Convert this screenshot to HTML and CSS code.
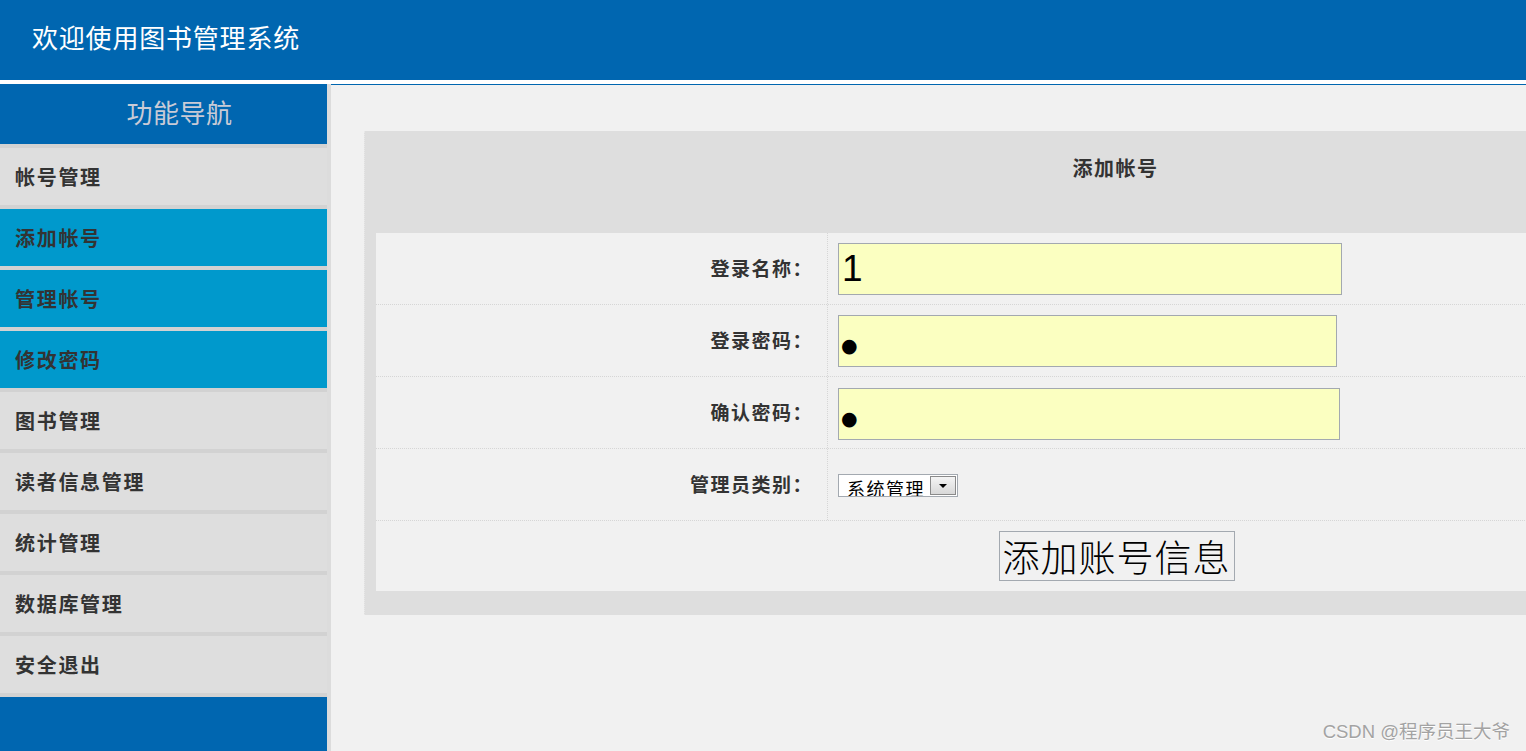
FILE: index.html
```html
<!DOCTYPE html>
<html lang="zh-CN">
<head>
<meta charset="utf-8">
<title>图书管理系统</title>
<link rel="stylesheet" href="styles.css">
</head>
<body>
<header class="topbar">
  <h1 class="site-title">欢迎使用图书管理系统</h1>
</header>
<div class="layout">
  <nav class="sidebar">
    <div class="nav-title">功能导航</div>
    <a class="nav-item">帐号管理</a>
    <a class="nav-item active">添加帐号</a>
    <a class="nav-item active">管理帐号</a>
    <a class="nav-item active">修改密码</a>
    <a class="nav-item">图书管理</a>
    <a class="nav-item">读者信息管理</a>
    <a class="nav-item">统计管理</a>
    <a class="nav-item">数据库管理</a>
    <a class="nav-item">安全退出</a>
    <div class="nav-filler"></div>
  </nav>
  <main class="main">
    <section class="panel">
      <div class="panel-title">添加帐号</div>
      <form class="form-table">
        <div class="form-row">
          <label class="form-label">登录名称：</label>
          <div class="form-field"><input class="text-input w1" type="text" value="1"></div>
        </div>
        <div class="form-row">
          <label class="form-label">登录密码：</label>
          <div class="form-field"><input class="text-input pwd w2" type="text" value="●"></div>
        </div>
        <div class="form-row">
          <label class="form-label">确认密码：</label>
          <div class="form-field"><input class="text-input pwd w3" type="text" value="●"></div>
        </div>
        <div class="form-row">
          <label class="form-label">管理员类别：</label>
          <div class="form-field">
            <div class="fake-select">
              <span class="fake-select-text">系统管理</span>
              <span class="fake-select-btn"><span class="caret"></span></span>
            </div>
          </div>
        </div>
        <div class="form-row submit-row">
          <button type="button" class="submit-btn">添加账号信息</button>
        </div>
      </form>
    </section>
  </main>
</div>
<div class="watermark">CSDN @程序员王大爷</div>
</body>
</html>
```
FILE: styles.css
```css
html, body {
  margin: 0;
  padding: 0;
}
body {
  width: 1526px;
  height: 751px;
  overflow: hidden;
  background: #ffffff;
  font-family: "Noto Sans CJK SC", "Liberation Sans", sans-serif;
  position: relative;
}
.topbar {
  height: 80px;
  background: #0066b0;
  display: flex;
  align-items: center;
  padding-left: 32px;
  margin-bottom: 4px;
}
.site-title {
  margin: 0;
  font-size: 26px;
  font-weight: normal;
  letter-spacing: 0.8px;
  color: #ffffff;
  line-height: 1;
  padding-bottom: 6px;
}
.layout {
  display: flex;
  height: 667px;
}
.sidebar {
  width: 327px;
  flex: none;
  display: flex;
  flex-direction: column;
  border-right: 4px solid #dcdcdc;
}
.nav-title {
  height: 60px;
  box-sizing: border-box;
  background: #0066b0;
  color: #c9cbd6;
  font-size: 26px;
  letter-spacing: 0.5px;
  display: flex;
  align-items: center;
  justify-content: center;
  padding-left: 32px;
  padding-bottom: 6px;
}
.nav-item {
  height: 57px;
  box-sizing: content-box;
  border-top: 4px solid #d2d2d2;
  background: #dedede;
  color: #333333;
  font-size: 20px;
  font-weight: bold;
  letter-spacing: 1.7px;
  display: flex;
  align-items: center;
  padding-left: 15px;
  padding-bottom: 2px;
  margin-bottom: -2px;
  cursor: pointer;
}
.nav-item.active {
  background: #0099cc;
}
.nav-filler {
  flex: 1;
  border-top: 4px solid #d2d2d2;
  background: #0066b0;
}
.main {
  flex: 1;
  background: #f1f1f1;
  border-top: 1px solid #0066b0;
  padding: 46px 0 0 33px;
  overflow: hidden;
}
.panel {
  width: 1500px;
  background: #dedede;
  padding: 0 9px 24px 11px;
  box-sizing: border-box;
  border-left: 1px dotted #e8e8e8;
}
.panel-title {
  height: 102px;
  box-sizing: border-box;
  padding-top: 25px;
  text-align: center;
  font-size: 20px;
  font-weight: bold;
  letter-spacing: 1.5px;
  color: #333333;
  line-height: 24px;
}
.form-table {
  background: #f1f1f1;
  margin: 0;
}
.form-row {
  display: flex;
  height: 72px;
  border-bottom: 1px dotted #d6d6d6;
  box-sizing: border-box;
}
.form-label {
  width: 452px;
  flex: none;
  box-sizing: border-box;
  border-right: 1px dotted #d6d6d6;
  display: flex;
  align-items: center;
  justify-content: flex-end;
  padding-right: 14px;
  padding-bottom: 2px;
  font-size: 19px;
  font-weight: bold;
  letter-spacing: 1.5px;
  color: #333333;
}
.form-field {
  flex: 1;
  display: flex;
  align-items: center;
  padding-left: 10px;
}
.text-input {
  height: 52px;
  box-sizing: border-box;
  border: 1px solid #a3a9b0;
  background: #fbffc1;
  font-family: "Liberation Sans", sans-serif;
  font-size: 37px;
  color: #000000;
  padding: 0 3px;
  outline: none;
}
.text-input.w1 { width: 504px; }
.text-input.w2 { width: 499px; }
.text-input.w3 { width: 502px; margin-top: 2px; }
.text-input.pwd {
  font-family: "DejaVu Sans", sans-serif;
  font-size: 19px;
  padding-top: 8px;
  padding-left: 2px;
}
.fake-select {
  width: 120px;
  height: 23px;
  box-sizing: border-box;
  border: 1px solid #a3a9b0;
  background: #ffffff;
  display: flex;
  margin-top: 2px;
}
.fake-select-text {
  flex: 1;
  overflow: hidden;
  font-size: 18px;
  line-height: 27px;
  height: 21px;
  padding-left: 8px;
  color: #000000;
  white-space: nowrap;
  letter-spacing: 1.5px;
}
.fake-select-btn {
  width: 26px;
  height: 19px;
  margin: 1px;
  box-sizing: border-box;
  border: 1px solid #8a8a8a;
  background: linear-gradient(#f4f4f4, #d8d8d8);
  display: flex;
  align-items: center;
  justify-content: center;
}
.caret {
  width: 0;
  height: 0;
  border-left: 4px solid transparent;
  border-right: 4px solid transparent;
  border-top: 4px solid #000000;
}
.submit-row {
  height: 70px;
  border-bottom: none;
  justify-content: center;
  align-items: center;
}
.submit-btn {
  width: 236px;
  height: 50px;
  box-sizing: border-box;
  border: 1px solid #a3a9b0;
  background: #f1f1f1;
  font-family: "Noto Sans CJK SC", sans-serif;
  font-size: 37px;
  font-weight: 300;
  letter-spacing: 1px;
  color: #000000;
  padding: 0;
  line-height: 46px;
  margin-left: 2px;
  cursor: pointer;
}
.watermark {
  position: absolute;
  right: 16px;
  bottom: 8px;
  font-family: "Liberation Sans", "Noto Sans CJK SC", sans-serif;
  font-size: 18.5px;
  color: #a3a3a3;
  text-shadow: 0 1px 0 #ffffff;
}
```
